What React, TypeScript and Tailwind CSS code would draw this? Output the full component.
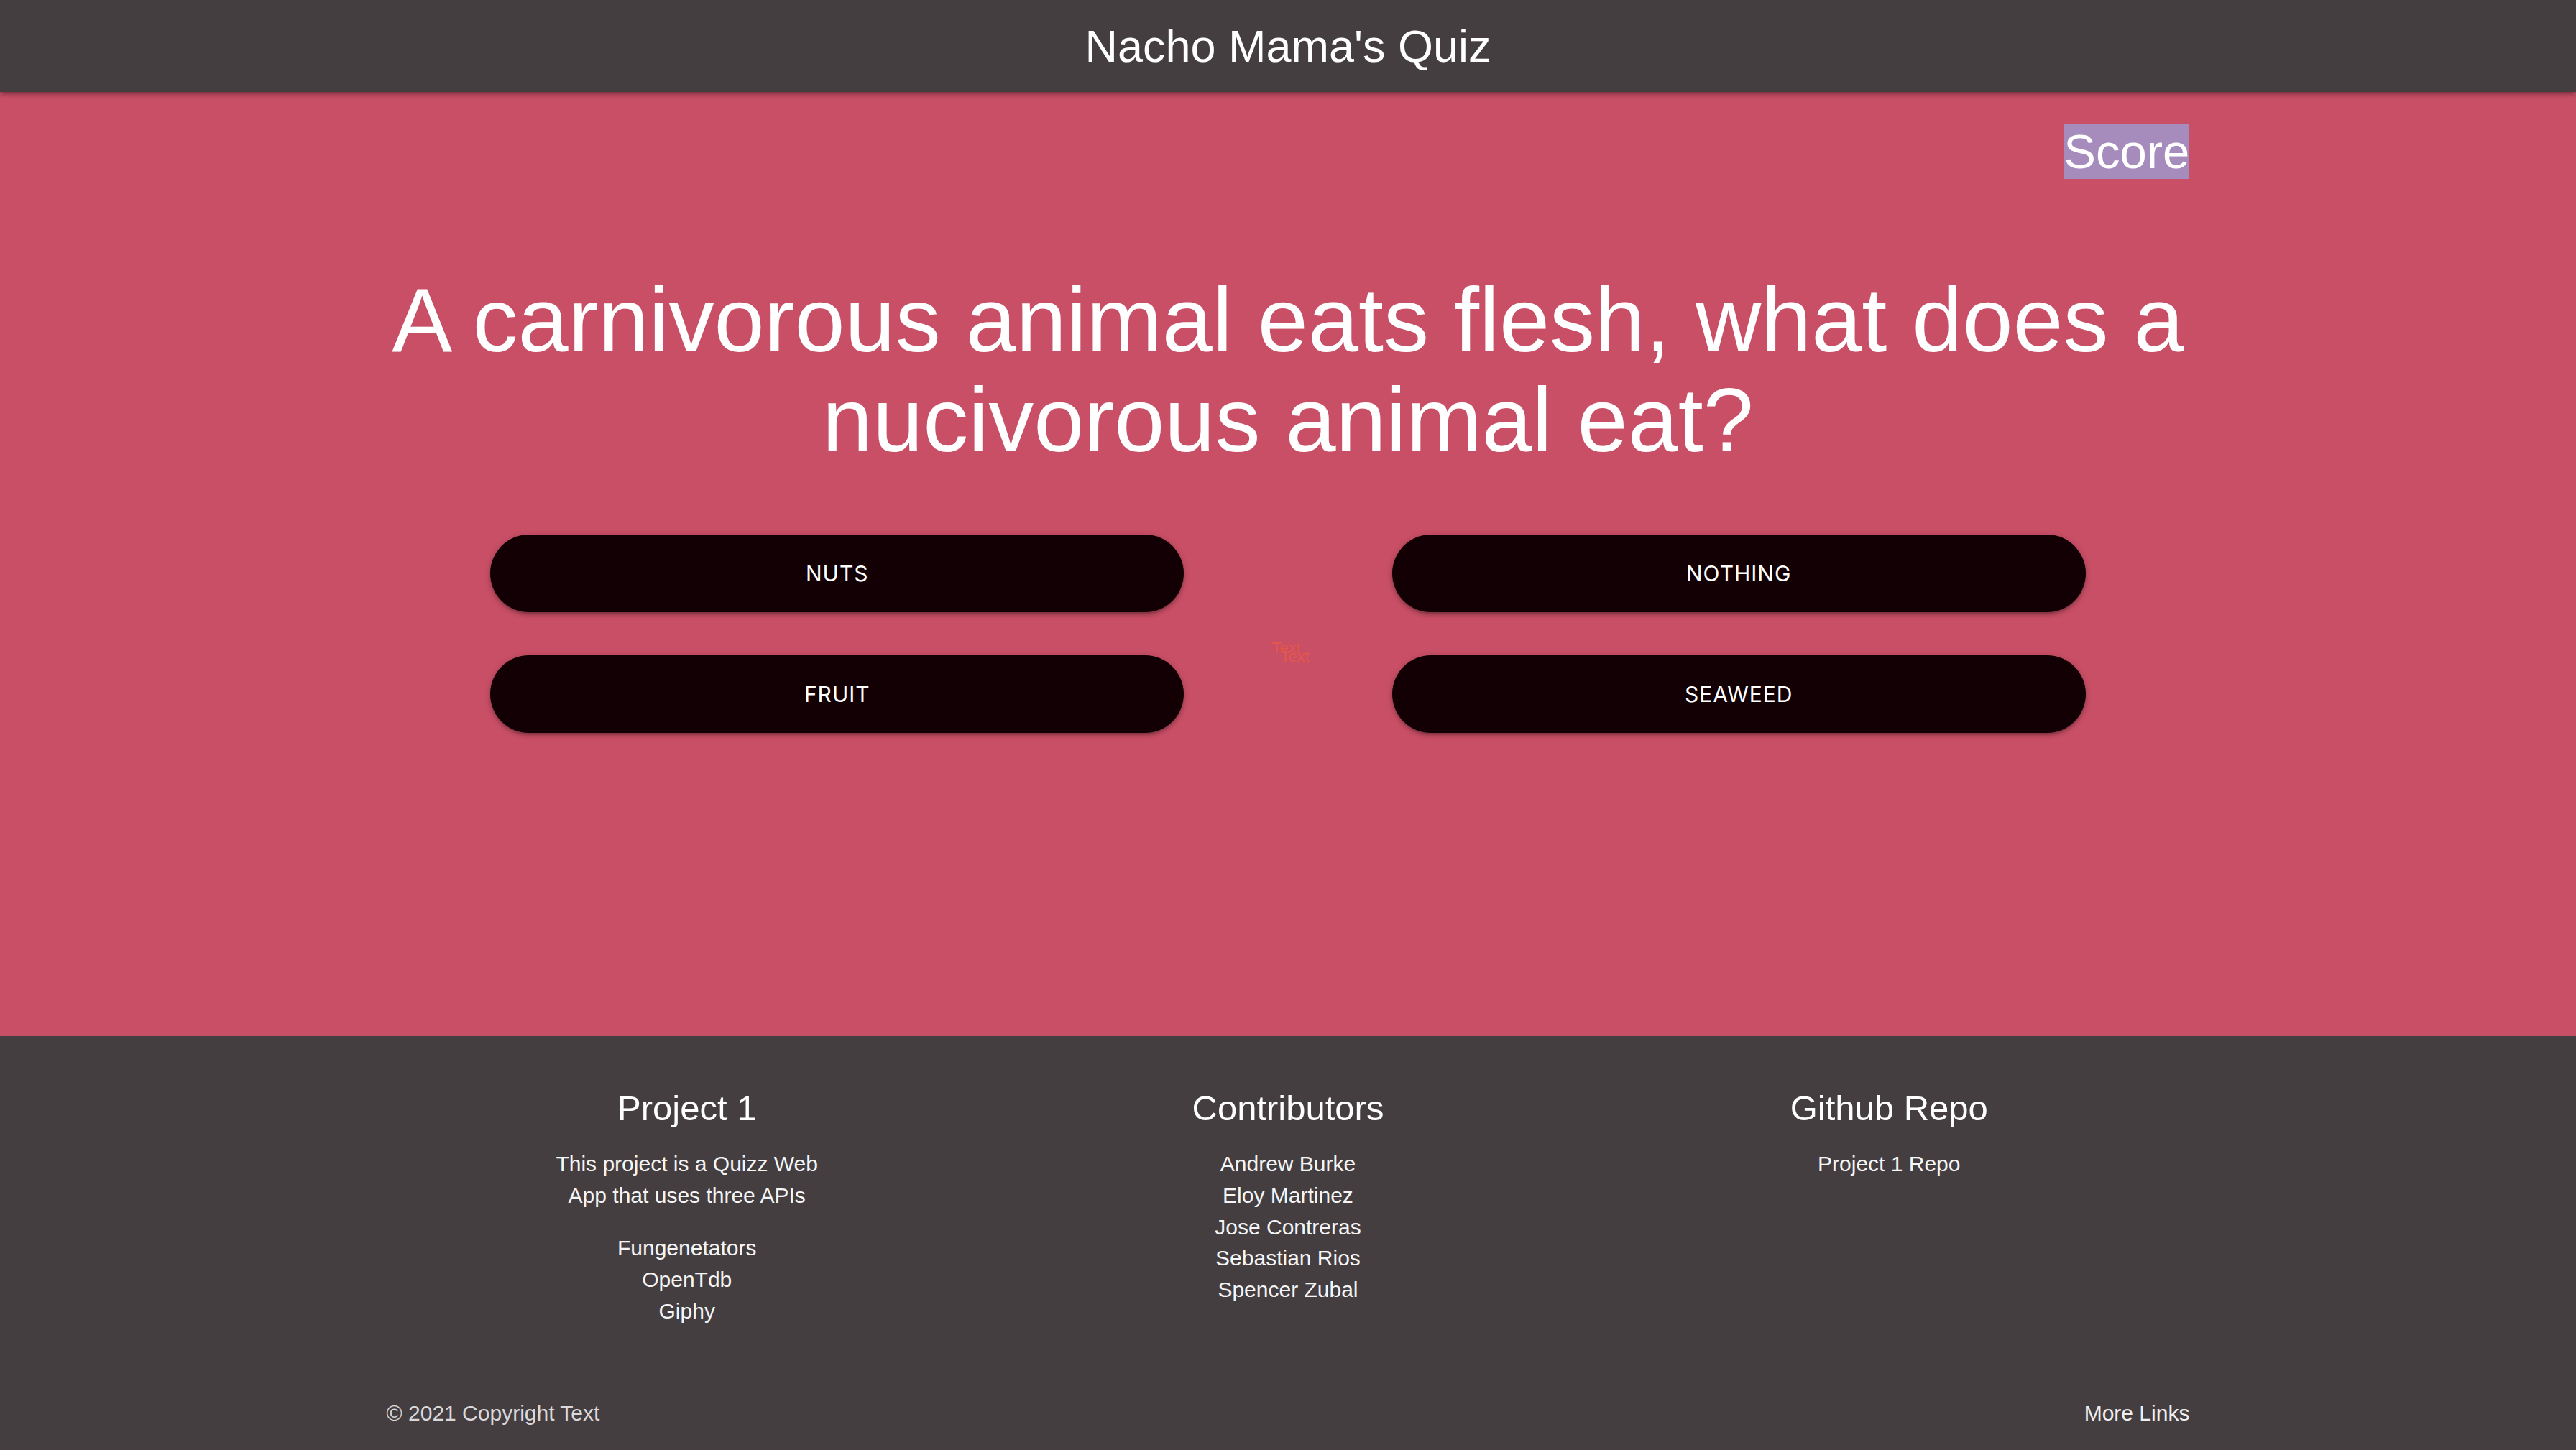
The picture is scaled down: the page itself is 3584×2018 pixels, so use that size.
import React from "react";

const sans = { fontFamily: '"Liberation Sans", Arial, Helvetica, sans-serif' };

function AnswerButton({ label }: { label: string }) {
  return (
    <div className="flex justify-center">
      <button
        className="h-[108px] w-[965px] rounded-full bg-[#120004] text-white uppercase text-[30px] tracking-[1px] shadow-[0_4px_4px_0_rgba(0,0,0,0.14),0_6px_2px_-4px_rgba(0,0,0,0.12),0_2px_10px_0_rgba(0,0,0,0.2)]"
        style={{ fontFamily: 'Inter, Roboto, "Liberation Sans", sans-serif' }}
      >
        {label}
      </button>
    </div>
  );
}

export default function App() {
  return (
    <div className="min-h-screen flex flex-col bg-[#c84f66]" style={sans}>
      {/* Nav */}
      <nav className="relative z-10 h-[128px] shrink-0 bg-[#443e41] flex justify-center shadow-[0_4px_4px_0_rgba(0,0,0,0.14),0_6px_2px_-4px_rgba(0,0,0,0.12),0_2px_10px_0_rgba(0,0,0,0.2)]">
        <a className="text-white text-[63px] leading-[128px]">Nacho Mama's Quiz</a>
      </nav>

      {/* Main */}
      <main className="flex-1 bg-[#c84f66]">
        <div className="w-[70%] mx-auto pt-[44px]">
          <div className="flex justify-end">
            <span className="block h-[77px] leading-[77px] text-[67px] text-white bg-[#a68cbd]">
              Score
            </span>
          </div>
          <h1 className="-mx-[20px] mt-[128px] text-center text-white text-[126px] leading-[1.1]">
            A carnivorous animal eats flesh, what does a nucivorous animal eat?
          </h1>
          <div className="relative mt-[90px] grid grid-cols-2 gap-y-[60px]">
            <AnswerButton label="Nuts" />
            <AnswerButton label="Nothing" />
            <AnswerButton label="Fruit" />
            <AnswerButton label="Seaweed" />
            <span className="absolute left-[1232px] top-[141px] text-[22px] text-[#e5574a]">Text</span>
            <span className="absolute left-[1244px] top-[153px] text-[22px] text-[#e5574a]">Text</span>
          </div>
        </div>
      </main>

      {/* Footer */}
      <footer className="shrink-0 bg-[#443e41]">
        <div className="h-[455px] w-[70%] mx-auto pt-[73px] grid grid-cols-3 items-start">
          <div className="flex flex-col items-center text-center">
            <h5 className="text-white text-[49px] leading-[54px]">Project 1</h5>
            <p className="mt-[29px] w-[390px] text-[#f5f5f5] text-[30px] leading-[44px]">
              This project is a Quizz Web App that uses three APIs
            </p>
            <div className="mt-[29px] text-[#f5f5f5] text-[30px] leading-[44px]">
              <div>Fungenetators</div>
              <div>OpenTdb</div>
              <div>Giphy</div>
            </div>
          </div>
          <div className="flex flex-col items-center text-center">
            <h5 className="text-white text-[49px] leading-[54px]">Contributors</h5>
            <ul className="mt-[29px] text-[#f5f5f5] text-[30px] leading-[43.75px]">
              <li>Andrew Burke</li>
              <li>Eloy Martinez</li>
              <li>Jose Contreras</li>
              <li>Sebastian Rios</li>
              <li>Spencer Zubal</li>
            </ul>
          </div>
          <div className="flex flex-col items-center text-center">
            <h5 className="text-white text-[49px] leading-[54px]">Github Repo</h5>
            <ul className="mt-[29px] text-[#f5f5f5] text-[30px] leading-[44px]">
              <li>
                <a>Project 1 Repo</a>
              </li>
            </ul>
          </div>
        </div>
        <div className="h-[121px] pt-[50px]">
          <div className="w-[70%] mx-auto flex justify-between text-[30px] leading-[40px] text-[#dbd8d9]">
            <span>© 2021 Copyright Text</span>
            <a className="text-[#f0eff0]">More Links</a>
          </div>
        </div>
      </footer>
    </div>
  );
}
